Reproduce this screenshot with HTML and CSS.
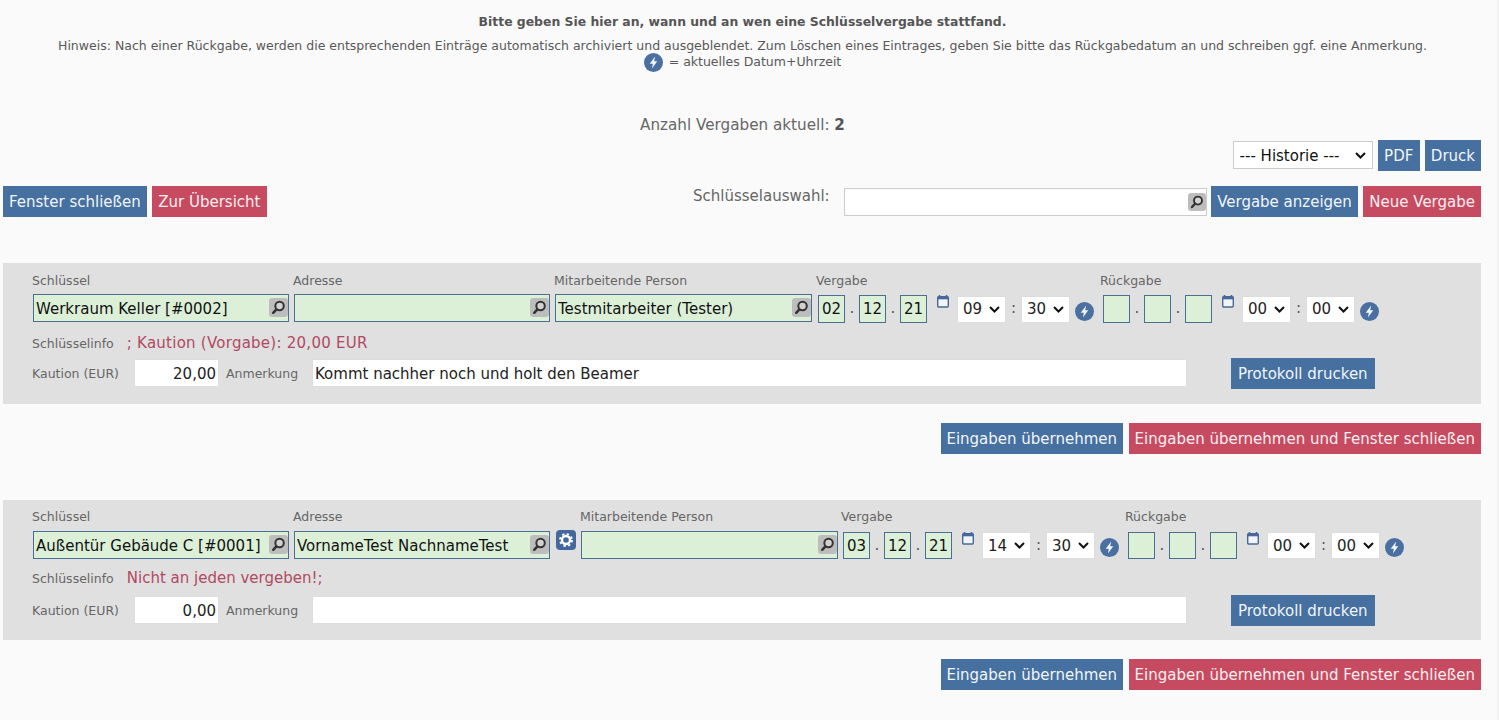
FILE: index.html
```html
<!DOCTYPE html>
<html lang="de">
<head>
<meta charset="utf-8">
<title>Schlüsselvergabe</title>
<link rel="stylesheet" href="styles.css">
</head>
<body>
<svg class="defs" width="0" height="0" aria-hidden="true">
  <symbol id="bolt" viewBox="0 0 18 18"><circle cx="9" cy="9" r="9" fill="#4a70a2"/><path d="M10.6 3.2 5.4 10.2h3l-.9 4.6 5.1-7H9.6z" fill="#f4f6fa"/></symbol>
  <symbol id="lens" viewBox="0 0 18 18"><rect width="18" height="18" rx="3" fill="#bdbdbd"/><circle cx="10" cy="7.6" r="4" fill="#d2d2d2" stroke="#333" stroke-width="1.9"/><path d="M7 10.8 4 14" stroke="#333" stroke-width="2.4" stroke-linecap="round"/></symbol>
  <symbol id="cal" viewBox="0 0 12 13"><path d="M2.5 0v2M9.5 0v2" stroke="#45699b" stroke-width="1.6"/><rect x=".7" y="1.7" width="10.6" height="10.3" rx="1" fill="#f2f4f7" stroke="#45699b" stroke-width="1.4"/><rect x=".7" y="1.7" width="10.6" height="2.6" fill="#45699b"/></symbol>
  <symbol id="gear" viewBox="0 0 20 20"><rect width="20" height="20" rx="4" fill="#43699c"/><circle cx="10" cy="10" r="4" fill="none" stroke="#fff" stroke-width="2.4"/><circle cx="10" cy="10" r="6" fill="none" stroke="#fff" stroke-width="1.8" stroke-dasharray="2.4 2.31"/></symbol>
</svg>

<section class="intro">
  <p class="intro-title">Bitte geben Sie hier an, wann und an wen eine Schlüsselvergabe stattfand.</p>
  <p class="intro-note">Hinweis: Nach einer Rückgabe, werden die entsprechenden Einträge automatisch archiviert und ausgeblendet. Zum Löschen eines Eintrages, geben Sie bitte das Rückgabedatum an und schreiben ggf. eine Anmerkung.</p>
  <p class="intro-note"><svg class="bolt-inline"><use href="#bolt"/></svg> = aktuelles Datum+Uhrzeit</p>
</section>

<p class="count">Anzahl Vergaben aktuell: <b>2</b></p>

<div class="tools">
  <select class="history"><option>--- Historie ---</option></select>
  <button class="btn blue wide">PDF</button>
  <button class="btn blue">Druck</button>
</div>

<div class="toolbar">
  <div class="group">
    <button class="btn blue">Fenster schließen</button>
    <button class="btn red wide">Zur Übersicht</button>
  </div>
  <div class="group">
    <span class="pick-label">Schlüsselauswahl:</span>
    <div class="lookup pick"><input class="plain-input" type="text"><svg class="lens"><use href="#lens"/></svg></div>
    <button class="btn blue wide">Vergabe anzeigen</button>
    <button class="btn red">Neue Vergabe</button>
  </div>
</div>

<section class="panel first">
  <div class="row">
    <div class="field"><label>Schlüssel</label><div class="lookup w256"><input type="text" value="Werkraum Keller [#0002]"><svg class="lens"><use href="#lens"/></svg></div></div>
    <div class="field"><label>Adresse</label><div class="lookup w256"><input type="text"><svg class="lens"><use href="#lens"/></svg></div></div>
    <div class="field"><label>Mitarbeitende Person</label><div class="lookup w257"><input type="text" value="Testmitarbeiter (Tester)"><svg class="lens"><use href="#lens"/></svg></div></div>
    <div class="field date-a"><label>Vergabe</label><div class="dt">
      <input class="d" type="text" value="02"><i>.</i><input class="d" type="text" value="12"><i>.</i><input class="d" type="text" value="21">
      <svg class="cal"><use href="#cal"/></svg>
      <select class="t"><option>09</option></select><i>:</i><select class="t"><option>30</option></select>
      <svg class="bolt"><use href="#bolt"/></svg>
    </div></div>
    <div class="field date-b"><label>Rückgabe</label><div class="dt">
      <input class="d" type="text"><i>.</i><input class="d" type="text"><i>.</i><input class="d" type="text">
      <svg class="cal"><use href="#cal"/></svg>
      <select class="t"><option>00</option></select><i>:</i><select class="t"><option>00</option></select>
      <svg class="bolt"><use href="#bolt"/></svg>
    </div></div>
  </div>
  <div class="info"><label>Schlüsselinfo</label><span class="warn">; Kaution (Vorgabe): 20,00 EUR</span></div>
  <div class="money">
    <label class="l-amount">Kaution (EUR)</label><input class="amount" type="text" value="20,00">
    <label class="l-note">Anmerkung</label><input class="note" type="text" value="Kommt nachher noch und holt den Beamer">
    <button class="btn blue print">Protokoll drucken</button>
  </div>
</section>
<div class="actions">
  <button class="btn blue narrow">Eingaben übernehmen</button>
  <button class="btn red">Eingaben übernehmen und Fenster schließen</button>
</div>

<section class="panel second">
  <div class="row">
    <div class="field"><label>Schlüssel</label><div class="lookup w256"><input type="text" value="Außentür Gebäude C [#0001]"><svg class="lens"><use href="#lens"/></svg></div></div>
    <div class="field"><label>Adresse</label><div class="lookup w256"><input type="text" value="VornameTest NachnameTest"><svg class="lens"><use href="#lens"/></svg></div></div>
    <svg class="gear"><use href="#gear"/></svg>
    <div class="field"><label>Mitarbeitende Person</label><div class="lookup w257"><input type="text"><svg class="lens"><use href="#lens"/></svg></div></div>
    <div class="field date-a"><label>Vergabe</label><div class="dt">
      <input class="d" type="text" value="03"><i>.</i><input class="d" type="text" value="12"><i>.</i><input class="d" type="text" value="21">
      <svg class="cal"><use href="#cal"/></svg>
      <select class="t"><option>14</option></select><i>:</i><select class="t"><option>30</option></select>
      <svg class="bolt"><use href="#bolt"/></svg>
    </div></div>
    <div class="field date-b"><label>Rückgabe</label><div class="dt">
      <input class="d" type="text"><i>.</i><input class="d" type="text"><i>.</i><input class="d" type="text">
      <svg class="cal"><use href="#cal"/></svg>
      <select class="t"><option>00</option></select><i>:</i><select class="t"><option>00</option></select>
      <svg class="bolt"><use href="#bolt"/></svg>
    </div></div>
  </div>
  <div class="info"><label>Schlüsselinfo</label><span class="warn">Nicht an jeden vergeben!;</span></div>
  <div class="money">
    <label class="l-amount">Kaution (EUR)</label><input class="amount" type="text" value="0,00">
    <label class="l-note">Anmerkung</label><input class="note" type="text">
    <button class="btn blue print">Protokoll drucken</button>
  </div>
</section>
<div class="actions">
  <button class="btn blue narrow">Eingaben übernehmen</button>
  <button class="btn red">Eingaben übernehmen und Fenster schließen</button>
</div>
</body>
</html>
```

FILE: styles.css
```css
* { box-sizing: border-box; }
html, body { height: 720px; overflow: hidden; }
body {
  margin: 0;
  background: #fafafa;
  border-right: 2px solid #f3f3f3;
  color: #555;
  font-family: "DejaVu Sans", Verdana, sans-serif;
  font-size: 13px;
}
.defs { position: absolute; }
p { margin: 0; }
.intro { padding: 14px 12px 0 0; text-align: center; font-size: 12.5px; line-height: 16px; }
.intro-title { font-weight: 700; font-size: 12.4px; margin-bottom: 8px; }
.intro-note { color: #585858; }
.bolt-inline { width: 19px; height: 19px; vertical-align: -3px; margin: -3px 2px -3px 0; }
.count { margin-top: 46px; padding-right: 12px; text-align: center; font-size: 15.2px; line-height: 18px; color: #666; }
.count b { color: #555; }
.tools { display: flex; justify-content: flex-end; align-items: flex-start; gap: 5px; padding-right: 16px; margin-top: 6px; }
select {
  appearance: none;
  background: #fff url("data:image/svg+xml,%3Csvg xmlns='http://www.w3.org/2000/svg' width='11' height='7'%3E%3Cpath d='M1 1l4.5 4.5L10 1' fill='none' stroke='%23111' stroke-width='2'/%3E%3C/svg%3E") no-repeat;
}
.history { width: 140px; height: 28px; font: 15px "DejaVu Sans", sans-serif; color: #111; background-position: right 6px center; border: 1px solid #ccc; padding: 1px 0 0 6px; margin-top: 1px; }
.btn { height: 31px; border: 0; padding: 1px 6px 0; font: 15px/30px "DejaVu Sans", sans-serif; color: #f2f5f9; white-space: nowrap; }
.wide { padding: 1px 6.5px 0; }
.narrow { padding: 1px 5.5px 0; }
.blue { background: #45709f; }
.red { background: #c74b60; color: #fbeef0; }
.toolbar { display: flex; justify-content: space-between; padding: 0 16px 0 3px; margin-top: 15px; }
.group { display: flex; gap: 5px; align-items: center; }
.pick-label { font-size: 15px; color: #666; margin-right: 8px; position: relative; top: -6px; }
.pick { width: 363px; height: 28px; margin: -1px 0 0; }
.plain-input { border: 1px solid #ccc !important; background: #fff !important; }
.panel { margin: 0 16px 0 3px; background: #e0e0e0; padding: 10px 0 0 29px; height: 141px; }
.first { margin-top: 46px; }
.second { margin-top: 46px; height: 140px; padding-top: 9px; }
.row { display: flex; align-items: flex-start; gap: 5px; }
.field label { display: block; height: 15px; line-height: 15px; font-size: 12.5px; color: #666; margin-bottom: 6px; white-space: nowrap; }
.second .field label { margin-bottom: 7px; }
.lookup { position: relative; height: 28px; margin: 0 -1px 0 1px; }
.lookup input { width: 100%; height: 100%; border: 1px solid #4a6f93; background: #dcf0d8; font: 15px "DejaVu Sans", sans-serif; color: #111; padding: 2px 20px 0 2px; border-radius: 0; }
.lens { position: absolute; width: 19px; height: 19px; right: 1px; top: 4px; }
.pick .lens { width: 18px; height: 18px; top: 5px; right: 1px; }
.w256 { width: 256px; }
.w257 { width: 257px; }
.gear { width: 20px; height: 20px; margin: 21px -1px 0 2px; flex: none; }
.date-a { width: 278px; }
.second .date-a { margin-left: -1px; }
.date-b { width: 282px; margin-left: 1px; }
.dt { display: flex; align-items: center; height: 28px; margin-left: 2px; }
.date-b .dt { margin-left: 3px; }
.dt i { font-style: normal; font-size: 15px; width: 14px; text-align: center; color: #555; flex: none; }
.t + i { width: 15px; }
.d { width: 27px; height: 28px; flex: none; border: 1px solid #4a6f93; background: #dcf0d8; font: 15px "DejaVu Sans", sans-serif; color: #111; padding: 0; text-align: center; margin-top: 1px; }
.second .d { height: 27px; }
.cal { width: 12px; height: 13px; margin: -13px 8px 0 10px; flex: none; }
.t { width: 49px; height: 27px; flex: none; font: 15px "DejaVu Sans", sans-serif; color: #222; background-position: right 5px center; border: 1px solid #ddd; padding-left: 5px; margin-top: 2px; }
.second .t { margin-top: 1px; }
.bolt { width: 19px; height: 19px; margin-left: 5px; margin-top: 6px; flex: none; }
.second .bolt { margin-top: 5px; }
.info { display: flex; align-items: baseline; gap: 13px; margin-top: 12px; height: 18px; }
.second .info { margin-top: 10px; }
.info label { font-size: 12.5px; color: #666; }
.warn { font-size: 15px; color: #b04a62; }
.first .warn { letter-spacing: .25px; }
.money { display: flex; align-items: center; margin-top: 5px; height: 32px; }
.second .money { margin-top: 7px; }
.money label { font-size: 12.5px; color: #666; white-space: nowrap; padding-top: 1px; }
.l-amount { width: 102px; flex: none; }
.l-note { width: 86px; margin-left: 7px; flex: none; }
.amount { width: 85px; height: 28px; flex: none; border: 1px solid #ddd; background: #fff; font: 15px "DejaVu Sans", sans-serif; color: #222; text-align: right; padding: 2px 2px 0; }
.note { width: 875px; height: 28px; flex: none; border: 1px solid #ddd; background: #fff; font: 15px "DejaVu Sans", sans-serif; color: #222; padding: 2px 2px 0; }
.print { margin-left: 44px; padding: 1px 7px 0; }
.actions { display: flex; justify-content: flex-end; gap: 6px; padding-right: 16px; margin-top: 19px; }
```
